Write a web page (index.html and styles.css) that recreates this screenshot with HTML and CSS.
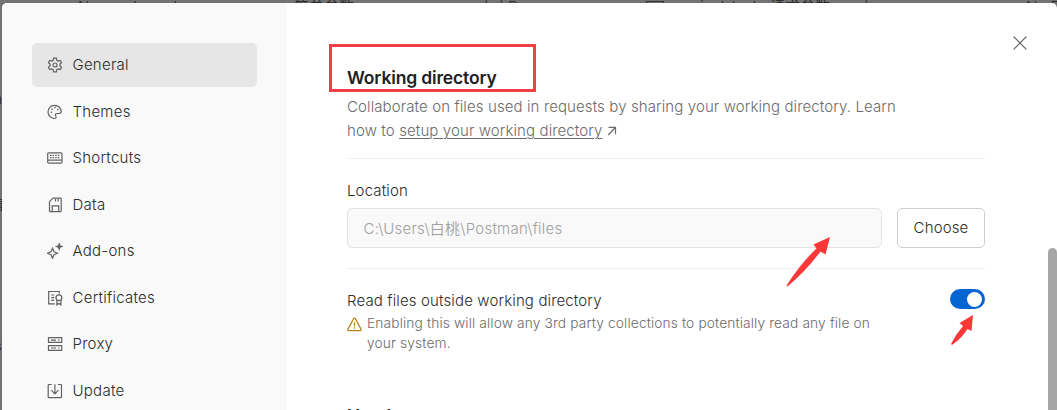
FILE: index.html
```html
<!DOCTYPE html>
<html lang="en">
<head>
<meta charset="utf-8">
<title>Settings</title>
<link rel="stylesheet" href="styles.css">
</head>
<body>
<div class="backdrop">
  <span class="tab" style="left:78px">New</span>
  <span class="tab" style="left:133px">Import</span>
  <span class="tab" style="left:294px">简单参数</span>
  <span class="tab" style="left:484px">|</span>
  <span class="tab" style="left:499px">|</span>
  <span class="tab" style="left:508px">D</span>
  <span class="tab box" style="left:646px"></span>
  <span class="tab" style="left:677px">project_test</span>
  <span class="tab" style="left:770px">请求参数</span>
  <span class="tab" style="left:864px">|</span>
  <span class="tab" style="left:1026px">No E</span>
  <span class="tab side" style="top:90px">a</span>
  <span class="tab side" style="top:195px">录</span>
  <span class="tab side" style="top:337px">s</span>
</div>
<div class="modal">
  <nav class="sidebar">
    <a class="item active"><svg class="icon" viewBox="0 0 16 16"><path d="M6.700 1.200h2.600l.5 2.100 1.300.8 2.100-.7 1.300 2.300-1.600 1.500v1.600l1.600 1.500-1.300 2.300-2.100-.7-1.300.8-.5 2.100H6.700l-.5-2.100-1.300-.8-2.100.7-1.300-2.300 1.600-1.500V7.200L1.500 5.700l1.300-2.300 2.100.7 1.300-.8z"/><circle cx="8" cy="8" r="2"/></svg>General</a>
    <a class="item"><svg class="icon" viewBox="0 0 16 16"><path d="M7.600 14.500A6.600 6.600 0 1 1 14.200 7.600c0 1.300-.8 1.900-2 1.900H9.900c-1.500 0-1.900 1.200-1.200 2.300.7 1.100.6 2.700-1.100 2.700z"/><path d="M3.800 8.200h1.400M4.500 5.200h1.400M7.300 3.600h1.400M10.200 5.600h1.400" stroke-width="1.500"/></svg>Themes</a>
    <a class="item"><svg class="icon" viewBox="0 0 16 16"><rect x=".7" y="2.800" width="14.300" height="10.300" rx="1"/><path d="M3 5.300h9.800M3 7.700h9.800" stroke-dasharray="1.500 1.100"/><path d="M1 10.200h13.700"/></svg>Shortcuts</a>
    <a class="item"><svg class="icon" viewBox="0 0 16 16"><path d="M6 1.200h7.400a.8.800 0 0 1 .8.800v11.900a.8.800 0 0 1-.8.800H3.300a.8.800 0 0 1-.8-.8V4.700z"/><path d="M5.200 14.500V8.800h6.500v5.700M8.500 2v2.500M11.200 2v2.500"/></svg>Data</a>
    <a class="item"><svg class="icon" viewBox="0 0 16 16"><path d="M5.500 5.300 7 8.800l3.500 1.500L7 11.800l-1.500 3.500L4 11.800.5 10.300 4 8.800z"/><path d="M12.200.8l.7 2 2 .7-2 .7-.7 2-.7-2-2-.7 2-.7z" fill="currentColor"/></svg>Add-ons</a>
    <a class="item"><svg class="icon" viewBox="0 0 16 16"><path d="M7.800 13.800H1.700V1.500h10.600v2M4.200 5h3M4.200 7.700h3M4.200 10.300h3"/><circle cx="11.900" cy="7.800" r="2.900"/><path d="M9.900 10v4.800l2-1.300 2 1.300V10"/></svg>Certificates</a>
    <a class="item"><svg class="icon" viewBox="0 0 16 16"><path d="M1.500 1.700h13.200v4.700H1.500zM1.500 9.600h13.200v4.700H1.500zM4 4.100h5M11 4.100h1.400M4 12h5M11 12h1.400"/></svg>Proxy</a>
    <a class="item"><svg class="icon" viewBox="0 0 16 16"><path d="M4.800 1.500H1.900a.7.700 0 0 0-.7.700v11.800c0 .4.300.7.700.7h11.900c.4 0 .7-.3.700-.7V2.200a.7.700 0 0 0-.7-.7h-2.900M7.900 1.200v9.300M4.300 7.200l3.600 3.600 3.600-3.600"/></svg>Update</a>
  </nav>
  <main class="content">
    <h2 class="title">Working directory</h2>
    <p class="desc">Collaborate on files used in requests by sharing your working directory. Learn<br>how to <a class="link">setup your working directory</a> <svg class="ext" viewBox="0 0 10 10"><path d="M1.500 1.300h7v7M8.300 1.500l-7 7.500"/></svg></p>
    <section class="location">
      <label class="label">Location</label>
      <div class="row">
        <div class="input">C:\Users\白桃\Postman\files</div>
        <button class="choose">Choose</button>
      </div>
    </section>
    <section class="read">
      <div>
        <div class="label">Read files outside working directory</div>
        <div class="warning"><svg class="warn-icon" viewBox="0 0 16 16"><path d="M8 1.300c.4 0 .7.200.9.500l6.200 11.400c.3.700-.1 1.300-.8 1.300H1.700c-.7 0-1.100-.6-.8-1.300L7.100 1.800c.2-.3.500-.5.900-.5z"/><path d="M8 5.700v4.300M8 11v1.500"/></svg><p class="help">Enabling this will allow any 3rd party collections to potentially read any file on<br>your system.</p></div>
      </div>
      <div class="toggle"><span class="knob"></span></div>
    </section>
    <h2 class="title next">Headers</h2>
  </main>
  <svg class="close" viewBox="0 0 14 14"><path d="M.7.700l12.600 12.600M13.300.700.7 13.300"/></svg>
  <div class="scrollbar"></div>
</div>
<div class="highlight"></div>
<svg class="arrows" viewBox="0 0 1057 410">
  <path d="M830 237 813.500 244.500 816.500 248.500Q801 263 786.500 285.500L787.500 286.500Q806 271 820.500 251.500L825.500 254.500z"/>
  <path d="M973 315 959.500 323 963 326Q956 334 951 344L952 345Q962 338 967.500 329L971.500 331z"/>
</svg>
</body>
</html>
```
FILE: styles.css
```css
* { box-sizing: border-box; }
body {
  margin: 0;
  width: 1057px;
  height: 410px;
  overflow: hidden;
  position: relative;
  background: #737373;
  color: #2b2b2b;
  font: 350 15px/24px Inter, "Noto Sans CJK SC", sans-serif;
}
.backdrop { position: absolute; inset: 0; color: #282828; overflow: hidden; }
.tab { position: absolute; top: -2px; line-height: 18px; font-size: 15px; white-space: nowrap; }
.tab.side { left: -5px; font-size: 13px; }
.tab.box { top: 1px; width: 18px; height: 12px; border: 1px solid #333; }
.modal {
  position: relative;
  display: flex;
  width: 1055px;
  height: 420px;
  margin: 3px 0 0 2px;
  border-radius: 5px;
  background: #fff;
  overflow: hidden;
}
.sidebar {
  width: 285px;
  flex: none;
  padding: 40px 30px 0;
  background: #f9f9f9;
  display: flex;
  flex-direction: column;
  gap: 2.500px;
}
.item {
  display: flex;
  flex: none;
  align-items: center;
  gap: 9.500px;
  height: 44px;
  padding-left: 15px;
  border-radius: 5px;
  letter-spacing: .26px;
}
.active { background: #e6e6e6; }
.icon { width: 16px; height: 16px; flex: none; fill: none; stroke: #626262; stroke-width: 1.200; color: #626262; }
.content { width: 698px; padding: 62px 0 0 60px; flex: none; }
.title { margin: 0; font-size: 17.500px; line-height: 25px; font-weight: 600; color: #212121; letter-spacing: -.15px; }
.desc { margin: 5px 0 0; padding-bottom: 15px; color: #6b6b6b; border-bottom: 1px solid #f0f0f0; white-space: nowrap; letter-spacing: .11px; }
.link { text-decoration: underline; text-underline-offset: 2px; text-decoration-thickness: 1px; }
.ext { width: 10px; height: 10px; fill: none; stroke: #6b6b6b; stroke-width: 1.200; }
.location { padding: 20px 0; border-bottom: 1px solid #f0f0f0; }
.label { display: block; white-space: nowrap; letter-spacing: .14px; }
.row { display: flex; gap: 15px; margin-top: 5px; }
.input {
  width: 535px;
  height: 40px;
  padding: 1px 15.500px 0;
  border: 1px solid #e3e3e3;
  border-radius: 5px;
  background: #f9f9f9;
  color: #a0a0a0;
  line-height: 38px;
  letter-spacing: .23px;
}
.choose {
  width: 88px;
  height: 40px;
  padding: 0;
  border: 1px solid #cfcfcf;
  border-radius: 5px;
  background: #fff;
  color: #2b2b2b;
  font: inherit;
  letter-spacing: .14px;
}
.read { display: flex; justify-content: space-between; padding-top: 20px; }
.warning { display: flex; gap: 6px; }
.warn-icon { width: 15px; height: 15px; margin-top: 4px; margin-right: -1px; fill: none; stroke: #b5841c; stroke-width: 1.300; }
.help { margin: 0; font-size: 13.750px; line-height: 20px; color: #6b6b6b; white-space: nowrap; letter-spacing: .13px; }
.toggle { display: flex; justify-content: flex-end; width: 35px; height: 20px; padding: 2.500px 3px; border-radius: 10px; background: #0265d2; }
.knob { width: 15px; height: 15px; border-radius: 50%; background: #fff; }
.next { margin-top: 50px; }
.close { position: absolute; left: 1011px; top: 33px; width: 14px; height: 14px; fill: none; stroke: #5c5c5c; stroke-width: 1.200; }
.scrollbar { position: absolute; left: 1046px; top: 245px; width: 9px; height: 200px; border-radius: 5px; background: #a6a6a6; }
.highlight { position: absolute; left: 329px; top: 44px; width: 207px; height: 48px; border: 3px solid #ef4044; }
.arrows { position: absolute; left: 0; top: 0; width: 1057px; height: 410px; fill: #fb3838; }
```
